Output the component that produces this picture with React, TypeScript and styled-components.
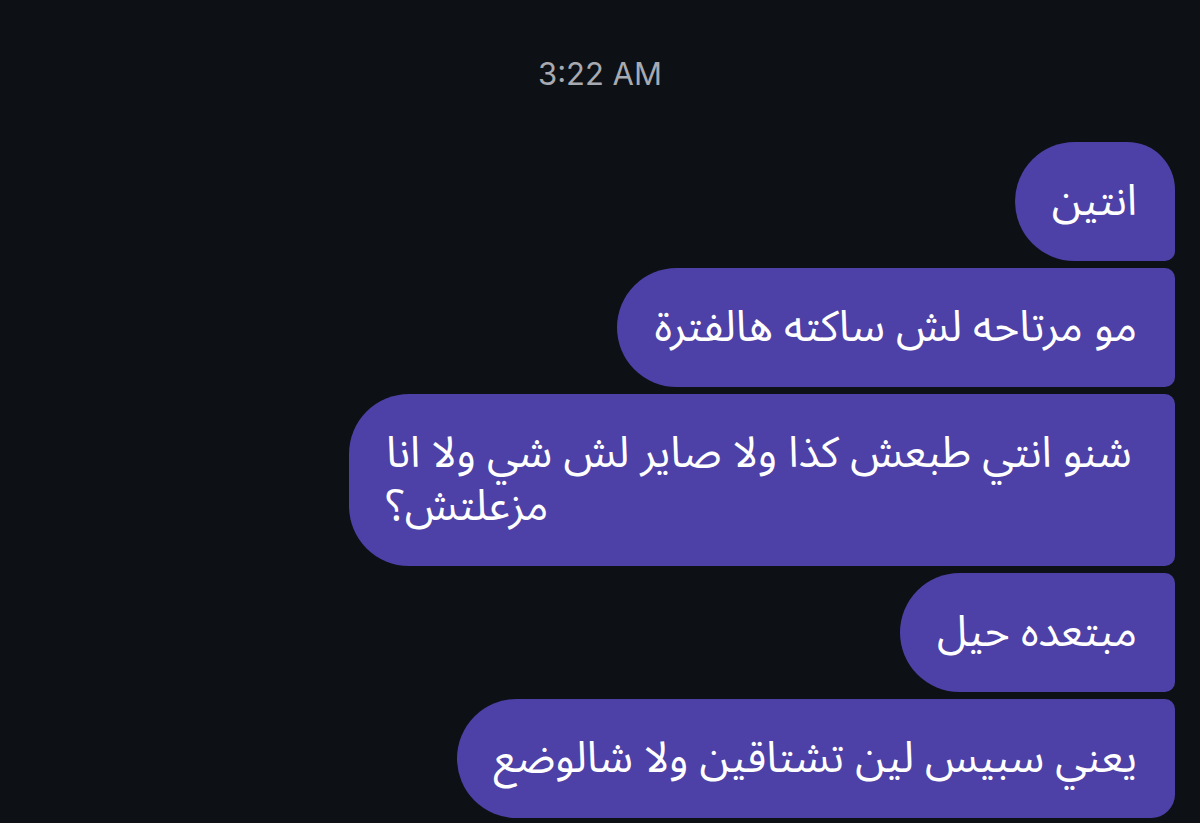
import styled, { createGlobalStyle, css } from "styled-components";

const GlobalStyle = createGlobalStyle`
  html, body {
    margin: 0;
    padding: 0;
    background: #0d1014;
  }
  body {
    font-family: "Noto Sans", "DejaVu Sans", sans-serif;
  }
`;

type Pos = "first" | "middle" | "last";

const Screen = styled.div`
  width: 1200px;
  height: 823px;
  overflow: hidden;
  background: #0d1014;
  display: flex;
  flex-direction: column;
`;

const Stamp = styled.div`
  padding-top: 55px;
  height: 142px;
  box-sizing: border-box;
  text-align: center;
  font-family: Inter, Roboto, "Liberation Sans", sans-serif;
  font-size: 31px;
  line-height: 38px;
  color: #a7aab1;
`;

const Thread = styled.div`
  display: flex;
  flex-direction: column;
  align-items: flex-end;
  gap: 7px;
  padding: 0 25px 0 0;
`;

const Bubble = styled.div<{ $pos: Pos }>`
  box-sizing: border-box;
  max-width: 826px;
  padding: 33px 38px 33px 37px;
  background: #4d40a6;
  color: #ffffff;
  font-family: "Noto Sans Arabic", "Noto Sans", "DejaVu Sans", sans-serif;
  font-size: 43px;
  line-height: 53px;
  direction: rtl;
  text-align: left;
  border-radius: 60px 10px 10px 60px;
  ${p =>
    p.$pos === "first" &&
    css`
      border-radius: 60px 48px 10px 60px;
    `}
  ${p =>
    p.$pos === "last" &&
    css`
      border-radius: 60px 10px 24px 60px;
    `}
`;

const messages = [
  "انتين",
  "مو مرتاحه لش ساكته هالفترة",
  "شنو انتي طبعش كذا ولا صاير لش شي ولا انا مزعلتش؟",
  "مبتعده حيل",
  "يعني سبيس لين تشتاقين ولا شالوضع",
];

function App() {
  return (
    <Screen>
      <GlobalStyle />
      <Stamp>3:22 AM</Stamp>
      <Thread>
        {messages.map((m, i) => (
          <Bubble
            key={i}
            $pos={i === 0 ? "first" : i === messages.length - 1 ? "last" : "middle"}>
            {m}
          </Bubble>
        ))}
      </Thread>
    </Screen>
  );
}

export default App;
